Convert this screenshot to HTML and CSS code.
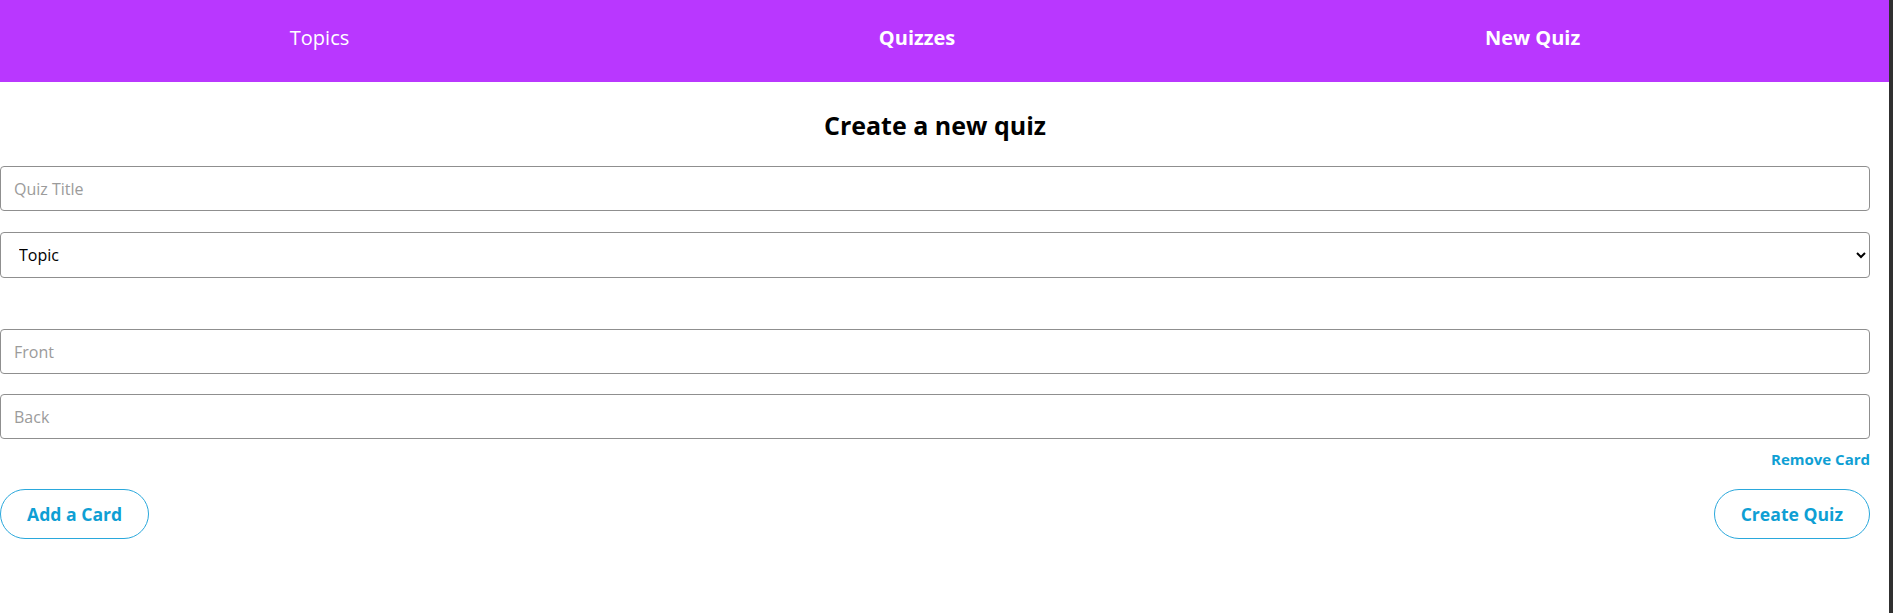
FILE: index.html
```html
<!DOCTYPE html>
<html lang="en">
<head>
<meta charset="utf-8">
<title>Create a new quiz</title>
<link rel="stylesheet" href="styles.css">
</head>
<body>
<div class="page">
  <nav class="nav">
    <ul class="nav-list">
      <li class="nav-item"><a class="nav-link" href="#">Topics</a></li>
      <li class="nav-item"><a class="nav-link nav-link--active" href="#">Quizzes</a></li>
      <li class="nav-item"><a class="nav-link nav-link--active" href="#">New Quiz</a></li>
    </ul>
  </nav>
  <main class="main">
    <h1 class="title">Create a new quiz</h1>
    <form class="quiz-form">
      <input class="field" type="text" placeholder="Quiz Title">
      <select class="field field--select">
        <option>Topic</option>
      </select>
      <div class="cards">
        <div class="card">
          <input class="field" type="text" placeholder="Front">
          <input class="field field--back" type="text" placeholder="Back">
          <div class="card-actions">
            <button class="link-button" type="button">Remove Card</button>
          </div>
        </div>
      </div>
      <div class="actions">
        <button class="pill-button" type="button">Add a Card</button>
        <button class="pill-button" type="submit">Create Quiz</button>
      </div>
    </form>
  </main>
</div>
</body>
</html>
```

FILE: styles.css
```css
html, body {
  margin: 0;
  padding: 0;
  background: #ffffff;
}

body {
  font-family: "Open Sans", "Noto Sans", sans-serif;
  color: #000000;
}

.page {
  min-height: 100vh;
  box-sizing: border-box;
  border-right: 4px solid #303030;
}

.nav {
  background: #b937ff;
  height: 82px;
  box-sizing: border-box;
  padding: 24px 19px 0 0;
}

.nav-list {
  list-style: none;
  margin: 0;
  padding: 0 25px;
  display: flex;
}

.nav-item {
  flex: 1 1 auto;
  text-align: center;
}

.nav-link {
  color: #ffffff;
  text-decoration: none;
  font-size: 20px;
  font-weight: 400;
}

.nav-link--active {
  font-weight: 700;
}

.main {
  margin-right: 19px;
}

.title {
  margin: 26px 0 24px;
  font-size: 25px;
  font-weight: 700;
  text-align: center;
  line-height: 34px;
}

.quiz-form {
  display: flex;
  flex-direction: column;
}

.field {
  display: block;
  width: 100%;
  height: 45px;
  box-sizing: border-box;
  margin: 0;
  padding: 0 13px;
  border: 1px solid #8f8f8f;
  border-radius: 4px;
  background: #ffffff;
  font-family: "Open Sans", "Noto Sans", sans-serif;
  font-size: 16px;
  color: #000000;
  outline: none;
}

.field::placeholder {
  color: #9b9b9b;
}

.field--select {
  height: 46px;
  margin-top: 21px;
  padding: 0 10px 0 14px;
  font-size: 16px;
}

.cards {
  margin-top: 51px;
}

.card {
  display: flex;
  flex-direction: column;
}

.field--back {
  margin-top: 20px;
}

.card-actions {
  display: flex;
  justify-content: flex-end;
  margin-top: 10px;
}

.link-button {
  border: none;
  background: none;
  padding: 0;
  font-family: "Open Sans", "Noto Sans", sans-serif;
  font-size: 15px;
  font-weight: 700;
  line-height: 20px;
  color: #0f9fd4;
  cursor: pointer;
}

.actions {
  display: flex;
  justify-content: space-between;
  margin-top: 20px;
}

.pill-button {
  height: 50px;
  box-sizing: border-box;
  padding: 0 26px;
  border: 1px solid #2aa8dc;
  border-radius: 25px;
  background: #ffffff;
  font-family: "Open Sans", "Noto Sans", sans-serif;
  font-size: 17.6px;
  font-weight: 700;
  color: #0f9fd4;
  cursor: pointer;
}
```
